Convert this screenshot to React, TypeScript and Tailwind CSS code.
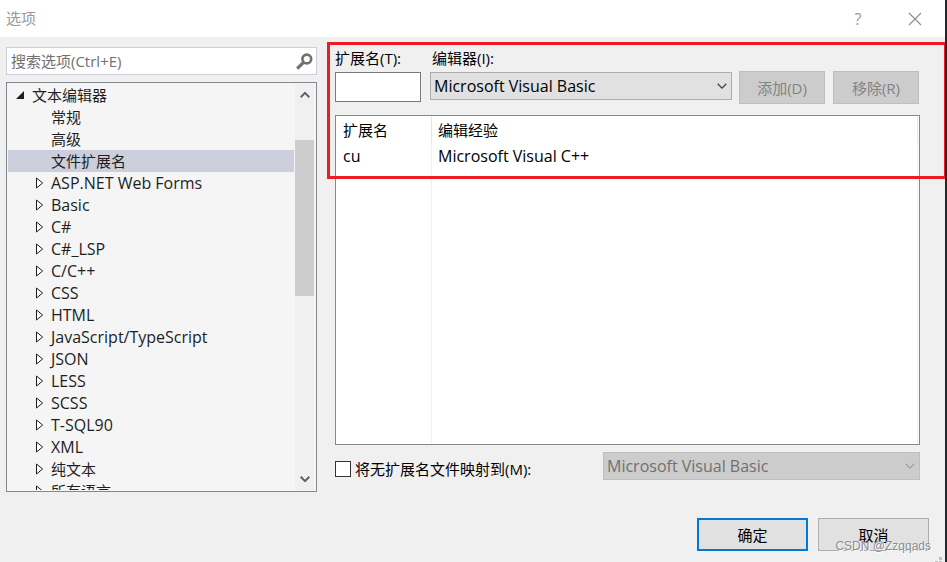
import { useState } from "react";

type Node = { label: string; kind: "open" | "leaf" | "closed"; latin?: boolean };

const nodes: Node[] = [
  { label: "文本编辑器", kind: "open" },
  { label: "常规", kind: "leaf" },
  { label: "高级", kind: "leaf" },
  { label: "文件扩展名", kind: "leaf" },
  { label: "ASP.NET Web Forms", kind: "closed", latin: true },
  { label: "Basic", kind: "closed", latin: true },
  { label: "C#", kind: "closed", latin: true },
  { label: "C#_LSP", kind: "closed", latin: true },
  { label: "C/C++", kind: "closed", latin: true },
  { label: "CSS", kind: "closed", latin: true },
  { label: "HTML", kind: "closed", latin: true },
  { label: "JavaScript/TypeScript", kind: "closed", latin: true },
  { label: "JSON", kind: "closed", latin: true },
  { label: "LESS", kind: "closed", latin: true },
  { label: "SCSS", kind: "closed", latin: true },
  { label: "T-SQL90", kind: "closed", latin: true },
  { label: "XML", kind: "closed", latin: true },
  { label: "纯文本", kind: "closed" },
  { label: "所有语言", kind: "closed" },
];

function Chevron({ className, up = false, width = 1.3 }: { className: string; up?: boolean; width?: number }) {
  return (
    <svg viewBox="0 0 10 6" className={className} fill="none" stroke="currentColor" strokeWidth={width} aria-hidden="true">
      <path d={up ? "M0.7 5.2 5 0.9 9.3 5.2" : "M0.7 0.8 5 5.1 9.3 0.8"} />
    </svg>
  );
}

function TitleBar() {
  return (
    <header className="flex h-[37px] items-center bg-white pl-1.5 pr-[23px] text-[#999999]">
      <h1 className="flex-1 pb-0.5">选项</h1>
      <button type="button" aria-label="帮助" className="w-8 text-center text-base">
        ?
      </button>
      <button type="button" aria-label="关闭" className="ml-[34px] flex w-[14px] justify-center">
        <svg viewBox="0 0 14 14" className="size-[14px]" stroke="#8a8a8a" strokeWidth="1.1" aria-hidden="true">
          <path d="M1 1 13 13M13 1 1 13" />
        </svg>
      </button>
    </header>
  );
}

function SearchBox() {
  return (
    <div className="flex h-[28px] items-center border border-[#cccedb] bg-white pl-1 pr-[3px]">
      <input
        type="search"
        aria-label="搜索选项"
        placeholder="搜索选项(Ctrl+E)"
        className="min-w-0 flex-1 bg-transparent outline-none placeholder:text-[#717171]"
      />
      <svg viewBox="0 0 17 17" className="size-[17px]" fill="none" stroke="#717171" aria-hidden="true">
        <circle cx="10.8" cy="6" r="4.4" strokeWidth="2.6" />
        <path d="M7.8 9.2 1.2 15.6" strokeWidth="3.2" />
      </svg>
    </div>
  );
}

function Tree() {
  const [selected, setSelected] = useState("文件扩展名");
  return (
    <div className="flex h-[410px] border border-[#828790] bg-[#f5f5f5] py-px pl-px pr-0.5">
      <ul role="tree" aria-label="选项类别" className="min-w-0 flex-1 overflow-hidden">
        {nodes.map((node) => (
          <li
            key={node.label}
            role="treeitem"
            aria-selected={node.label === selected}
            onClick={() => setSelected(node.label)}
            className={`flex h-[22px] items-center text-[#1e1e1e] ${node.kind === "open" ? "pl-2" : "pl-7"} ${
              node.label === selected ? "bg-[#cccedb]" : ""
            }`}
          >
            <span className={node.kind === "open" ? "w-4" : "w-[15px]"}>
              {node.kind === "open" && (
                <svg viewBox="0 0 8 8" className="size-2" fill="#1e1e1e" aria-hidden="true">
                  <path d="M8 0V8H0Z" />
                </svg>
              )}
              {node.kind === "closed" && (
                <svg viewBox="0 0 8 12" className="h-3 w-2" fill="#ffffff" stroke="#1e1e1e" aria-hidden="true">
                  <path d="M0.5 1V11L6.6 6Z" />
                </svg>
              )}
            </span>
            <span className={node.latin ? "text-base leading-[22px]" : "leading-[22px]"}>{node.label}</span>
          </li>
        ))}
      </ul>
      <div className="ml-px flex w-[19px] flex-col items-center bg-[#f0f0f0] text-[#606060]">
        <div className="flex h-[22px] items-center">
          <Chevron up width={2} className="h-1.5 w-2.5" />
        </div>
        <div className="mt-[34px] h-[156px] w-full bg-[#cdcdcd]" />
        <div className="mt-auto flex h-[22px] items-center">
          <Chevron width={2} className="h-1.5 w-2.5" />
        </div>
      </div>
    </div>
  );
}

function EditorSelect({ id, label, disabled = false }: { id: string; label?: string; disabled?: boolean }) {
  return (
    <div className="relative h-[28px]">
      <select
        id={id}
        aria-label={label}
        disabled={disabled}
        className={`h-full w-full appearance-none border pl-[3px] pr-6 text-base leading-[22px] opacity-100 outline-none ${
          disabled ? "border-[#bfbfbf] bg-[#cccccc] text-[#707070]" : "border-[#adadad] bg-[#e1e1e1] text-black"
        }`}
      >
        <option>Microsoft Visual Basic</option>
        <option>Microsoft Visual C++</option>
      </select>
      <Chevron
        className={`pointer-events-none absolute right-[5px] top-[11px] h-1.5 w-2.5 ${
          disabled ? "text-[#a0a0a0]" : "text-[#404040]"
        }`}
      />
    </div>
  );
}

const disabledButton = "h-[33px] w-[86px] self-end border border-[#bfbfbf] bg-[#cccccc] text-[#838383]";

function ExtensionPage() {
  return (
    <section className="relative flex min-w-0 flex-1 flex-col pl-2 pr-[25px]">
      <div className="flex h-[57px]">
        <div className="w-[86px]">
          <label htmlFor="ext" className="block h-[25px] leading-[22px]">
            扩展名(T):
          </label>
          <input id="ext" type="text" className="block h-[30px] w-full border border-[#7a7a7a] bg-white px-1 outline-none" />
        </div>
        <div className="ml-[9px] min-w-0 flex-1">
          <label htmlFor="editor" className="block h-[25px] pl-0.5 leading-[22px]">
            编辑器(I):
          </label>
          <EditorSelect id="editor" />
        </div>
        <button type="button" disabled className={`ml-[7px] ${disabledButton}`}>
          添加(D)
        </button>
        <button type="button" disabled className={`ml-2 mr-px ${disabledButton}`}>
          移除(R)
        </button>
      </div>

      <div className="mt-[11px] flex flex-1 border border-[#828790] bg-white p-px">
        <table className="w-full table-fixed border-separate border-spacing-0 text-left">
          <thead>
            <tr className="h-[26px]">
              <th className="w-[95px] border-r border-[#e5e5e5] pl-1.5 font-normal">扩展名</th>
              <th className="border-r border-[#e5e5e5] pl-1.5 font-normal">编辑经验</th>
            </tr>
          </thead>
          <tbody>
            <tr className="h-[25px]">
              <td className="border-r border-[#e9f1fa] pl-1.5 text-base leading-[22px]">cu</td>
              <td className="border-r border-[#f0f0f0] pl-1.5 text-base leading-[22px]">Microsoft Visual C++</td>
            </tr>
            <tr>
              <td className="border-r border-[#e9f1fa]" />
              <td className="border-r border-[#f0f0f0]" />
            </tr>
          </tbody>
        </table>
      </div>

      <div className="mt-[7px] flex h-[40px]">
        <label className="flex h-[34px] flex-1 items-center gap-1">
          <input type="checkbox" className="size-4 appearance-none border border-[#333333] bg-white checked:bg-[#0078d7]" />
          将无扩展名文件映射到(M):
        </label>
        <div className="w-[317px]">
          <EditorSelect id="mapped" label="映射到的编辑器" disabled />
        </div>
      </div>

      <div className="pointer-events-none absolute -right-0.5 -top-[5px] left-0 h-[137px] border-[3px] border-[#ed1c24]" />
    </section>
  );
}

export default function App() {
  return (
    <div className="relative flex min-h-screen flex-col overflow-hidden border-r-2 border-[#25262b] bg-[#f0f0f0] font-['Open_Sans','Noto_Sans_CJK_SC',sans-serif] text-[15px] leading-[22px] text-black">
      <TitleBar />
      <main className="flex flex-1 gap-2.5 pl-1.5 pt-2.5">
        <div className="flex w-[311px] flex-col gap-[7px]">
          <SearchBox />
          <Tree />
        </div>
        <ExtensionPage />
      </main>
      <footer className="flex justify-end gap-2.5 pb-[11px] pr-4 pt-[26px]">
        <button type="button" className="h-[33px] w-[111px] border-2 border-[#0078d7] bg-[#e1e1e1]">
          确定
        </button>
        <button type="button" className="h-[33px] w-[111px] border border-[#adadad] bg-[#e1e1e1]">
          取消
        </button>
      </footer>
      <svg viewBox="0 0 8 6" className="absolute bottom-0 right-0.5 h-1.5 w-2" fill="#bfbfbf" aria-hidden="true">
        <path d="M4 1h3v3H4zM0 5h3v1H0zM4 5h3v1H4z" />
      </svg>
      <p className="pointer-events-none absolute bottom-2 right-3.5 font-['Liberation_Sans',sans-serif] text-xs leading-4 text-[#8c8c8c] [text-shadow:1px_1px_0_#ffffff]">
        CSDN @Zzqqads
      </p>
    </div>
  );
}
